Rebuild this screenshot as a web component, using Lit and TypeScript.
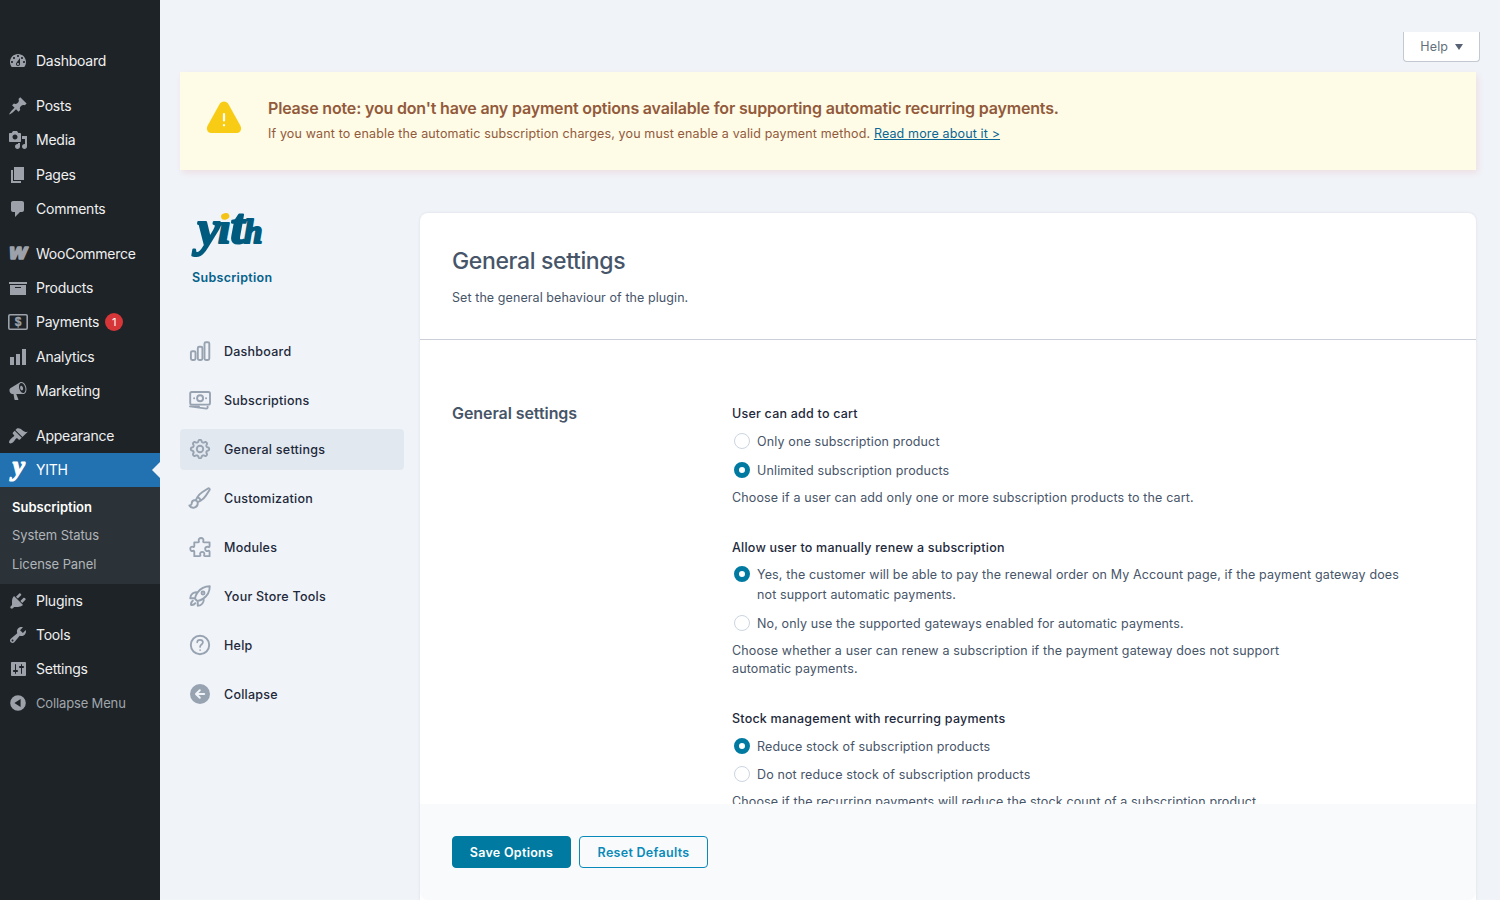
import { LitElement, html, svg, css } from "lit";
import { customElement, property } from "lit/decorators.js";
import { classMap } from "lit/directives/class-map.js";

const solid = (d: string) => svg`<path fill="currentColor" fill-rule="evenodd" d=${d}></path>`;

const menuIcons: Record<string, unknown> = {
  dashboard: solid("M3.76 16h12.48c1.1-1.37 1.76-3.11 1.76-5 0-4.42-3.58-8-8-8s-8 3.58-8 8c0 1.89.66 3.63 1.76 5zM10 4c.55 0 1 .45 1 1s-.45 1-1 1-1-.45-1-1 .45-1 1-1zM6 6c.55 0 1 .45 1 1s-.45 1-1 1-1-.45-1-1 .45-1 1-1zm8 0c.55 0 1 .45 1 1s-.45 1-1 1-1-.45-1-1 .45-1 1-1zm-5.37 5.55L12 7v6c0 1.1-.9 2-2 2s-2-.9-2-2c0-.57.24-1.08.63-1.45zM4 10c.55 0 1 .45 1 1s-.45 1-1 1-1-.45-1-1 .45-1 1-1zm12 0c.55 0 1 .45 1 1s-.45 1-1 1-1-.45-1-1 .45-1 1-1zm-5 3c0-.55-.45-1-1-1s-1 .45-1 1 .45 1 1 1 1-.45 1-1z"),
  post: solid("M10.44 3.02l1.82-1.82 6.36 6.35-1.83 1.82c-1.05-.68-2.48-.57-3.41.36l-.75.75c-.92.93-1.04 2.35-.35 3.41l-1.83 1.82-2.41-2.41-2.8 2.79c-.42.42-3.38 2.71-3.8 2.29s1.86-3.39 2.28-3.81l2.79-2.79L4.1 9.36l1.83-1.82c1.05.69 2.48.57 3.4-.36l.75-.75c.93-.92 1.05-2.35.36-3.41z"),
  media: solid("M13 11V4c0-.55-.45-1-1-1h-1.67L9 1H5L3.67 3H2c-.55 0-1 .45-1 1v7c0 .55.45 1 1 1h10c.55 0 1-.45 1-1zM7 4.5c1.38 0 2.5 1.12 2.5 2.5S8.38 9.5 7 9.5 4.5 8.38 4.5 7 5.62 4.5 7 4.5zM14 6h5v10.5c0 1.38-1.12 2.5-2.5 2.5S14 17.88 14 16.5s1.12-2.5 2.5-2.5c.17 0 .34.02.5.05V9h-3V6zm-4 8.05V13h2v3.5c0 1.38-1.12 2.5-2.5 2.5S7 17.88 7 16.5 8.12 14 9.5 14c.17 0 .34.02.5.05z"),
  page: solid("M6 15V2h10v13H6zm-1 1h8v2H3V5h2v11z"),
  comment: solid("M5 2h9c1.1 0 2 .9 2 2v7c0 1.1-.9 2-2 2h-2l-5 5v-5H5c-1.1 0-2-.9-2-2V4c0-1.1.9-2 2-2z"),
  woo: svg`<text class="woo" x="10" y="15.4" text-anchor="middle" textLength="18.5" lengthAdjust="spacingAndGlyphs">W</text>`,
  archive: solid("M19 4v2H1V4h18zM2 7h16v10H2V7zm11 3V9H7v1h6z"),
  money: svg`<rect x=".8" y="2.8" width="18.4" height="14.4" rx="1.2" fill="none" stroke="currentColor" stroke-width="1.6"></rect><text class="dollar" x="10" y="14.3" text-anchor="middle">$</text>`,
  chart: solid("M18 18V2h-4v16h4zm-6 0V7H8v11h4zm-6 0v-8H2v8h4z"),
  megaphone: solid("M18.15 5.94c.46 1.62.38 3.22-.02 4.48-.42 1.28-1.26 2.18-2.3 2.48-.16.06-.26.06-.4.06-.06.02-.12.02-.18.02-.06.02-.14.02-.22.02h-6.8l2.22 5.5c.02.14-.06.26-.14.34-.08.1-.24.16-.34.16H6.95c-.1 0-.26-.06-.34-.16-.08-.08-.16-.2-.14-.34l-1-5.5H4.25l-.02-.02c-.5.06-1.08-.18-1.54-.62s-.88-1.08-1.06-1.88c-.24-.8-.2-1.56-.02-2.2.18-.62.58-1.08 1.06-1.3l.02-.02 9-5.4c.1-.06.18-.1.24-.16.06-.04.14-.08.24-.12.16-.08.28-.12.5-.18 1.04-.3 2.24.1 3.22.98s1.84 2.24 2.26 3.86zm-2.58 5.98h-.02c.4-.1.74-.34 1.04-.7.58-.7.86-1.76.86-3.04 0-.64-.1-1.3-.28-1.98-.34-1.36-1.02-2.5-1.78-3.24s-1.68-1.1-2.46-.88c-.82.22-1.4.96-1.7 2-.32 1.04-.28 2.36.06 3.72.38 1.36 1 2.5 1.8 3.24.78.74 1.62 1.1 2.48.88zm-2.54-7.08c.22-.04.42-.02.62.04.38.16.76.48 1.02 1s.42 1.2.42 1.78c0 .3-.04.56-.12.8-.18.48-.44.84-.86.94-.34.1-.8-.06-1.14-.4s-.64-.86-.78-1.5c-.18-.62-.12-1.24.02-1.72s.48-.84.82-.94z"),
  brush: solid("M14.48 11.06L7.41 3.99l1.5-1.5c.5-.56 2.3-.47 3.51.32 1.21.8 1.43 1.28 2.91 2.1 1.18.64 2.45 1.26 4.45.85zm-.71.71L6.7 4.7 4.93 6.47c-.39.39-.39 1.02 0 1.41l1.06 1.06c.39.39.39 1.03 0 1.42-.6.6-1.43 1.11-2.21 1.69-.35.26-.7.53-1.01.84C1.43 14.23.4 16.08 1.4 17.07c.99 1 2.84-.03 4.18-1.36.31-.31.58-.66.85-1.02.57-.78 1.08-1.61 1.69-2.21.39-.39 1.02-.39 1.41 0l1.06 1.06c.39.39 1.02.39 1.41 0z"),
  yith: svg`<text class="script" x="10.5" y="15" text-anchor="middle">y</text>`,
  plugin: solid("M13.11 4.36L9.87 7.6 8 5.73l3.24-3.24c.35-.34 1.05-.2 1.56.32.52.51.66 1.21.31 1.55zm-8 1.77l.91-1.12 9.01 9.01-1.19.84c-.71.71-2.63 1.16-3.82 1.16H6.14L4.9 17.26c-.59.59-1.54.59-2.12 0-.59-.58-.59-1.53 0-2.12l1.24-1.24v-3.88c0-1.13.4-3.19 1.09-3.89zm7.26 3.97l3.24-3.24c.34-.35 1.04-.21 1.55.31.52.51.66 1.21.31 1.55l-3.24 3.25z"),
  tools: solid("M16.68 9.77c-1.34 1.34-3.3 1.67-4.95.99l-5.41 6.52c-.99.99-2.59.99-3.58 0s-.99-2.59 0-3.57l6.52-5.42c-.68-1.65-.35-3.61.99-4.95 1.28-1.28 3.12-1.62 4.72-1.06l-2.89 2.89 2.82 2.82 2.86-2.87c.53 1.58.18 3.39-1.08 4.65zM3.81 16.21c.4.39 1.04.39 1.43 0 .4-.4.4-1.04 0-1.43-.39-.4-1.03-.4-1.43 0-.39.39-.39 1.03 0 1.43z"),
  settings: solid("M18 16V4c0-.55-.45-1-1-1H4c-.55 0-1 .45-1 1v12c0 .55.45 1 1 1h13c.55 0 1-.45 1-1zM8 11h1c.55 0 1 .45 1 1s-.45 1-1 1H8v1.5c0 .28-.22.5-.5.5s-.5-.22-.5-.5V13H6c-.55 0-1-.45-1-1s.45-1 1-1h1V5.5c0-.28.22-.5.5-.5s.5.22.5.5V11zm5-2h-1c-.55 0-1-.45-1-1s.45-1 1-1h1V5.5c0-.28.22-.5.5-.5s.5.22.5.5V7h1c.55 0 1 .45 1 1s-.45 1-1 1h-1v5.5c0 .28-.22.5-.5.5s-.5-.22-.5-.5V9z"),
  collapse: solid("M10 2.2a7.8 7.8 0 1 0 0 15.6 7.8 7.8 0 0 0 0-15.6zM12.6 6v8L6.4 10z"),
};

/* Eight-lobed gear outline sampled around a circle. */
const gearPath = (() => {
  const pts: string[] = [];
  for (let i = 0; i < 192; i++) {
    const a = (i / 192) * Math.PI * 2;
    const r = 8.1 + 1.15 * Math.tanh(1.6 * Math.cos(8 * a));
    pts.push(`${(12 + r * Math.cos(a)).toFixed(2)} ${(12 + r * Math.sin(a)).toFixed(2)}`);
  }
  return `M${pts.join("L")}z`;
})();

const navIcons: Record<string, unknown> = {
  bars: svg`<rect x="2.9" y="12.2" width="4.6" height="8.8" rx="1.4"></rect><rect x="9.8" y="7.8" width="4.6" height="13.2" rx="1.4"></rect><rect x="16.5" y="3.2" width="4.8" height="17.8" rx="1.4"></rect>`,
  notes: svg`<rect x="2.2" y="4" width="19.8" height="12.6" rx="1.6"></rect><circle cx="12.1" cy="10.3" r="3"></circle><path d="M6.1 10.3h.1M18 10.3h.1M2 18.4l16.4 2.2c.7.1 1.2-.4 1.2-1v-1M2 18.4h9"></path>`,
  cog: svg`<path d=${gearPath}></path><circle cx="12" cy="12" r="3.2"></circle>`,
  paint: svg`<path d="M9.53 16.122a3 3 0 00-5.78 1.128 2.25 2.25 0 01-2.4 2.245 4.5 4.5 0 008.4-2.245c0-.399-.078-.78-.22-1.128zm0 0a15.998 15.998 0 003.388-1.62m-5.043-.025a15.994 15.994 0 011.622-3.395m3.42 3.42a15.995 15.995 0 004.764-4.648l3.876-5.814a1.151 1.151 0 00-1.597-1.597L14.146 6.32a15.996 15.996 0 00-4.649 4.763m3.42 3.42a6.776 6.776 0 00-3.42-3.42"></path>`,
  puzzle: svg`<path transform="translate(.9 .3) scale(.98)" d="M5.5 7.2h3.6c1.3 0 1.3-.9 1-1.500-.6-1.700.6-3 2.300-3s2.900 1.300 2.300 3c-.3.600-.3 1.500 1 1.500h5.400v3.800c0 1.200-.8 1.200-1.500.9-1.500-.6-3 .4-3 2s1.500 2.700 3 2c.7-.3 1.500-.2 1.500.9v4.500h-4.600c-1.100 0-1.200-.8-.9-1.500.6-1.500-.4-2.900-2-2.900s-2.600 1.400-2 2.900c.3.700.2 1.500-.9 1.500H5.500v-4.600c0-1.100-.7-1.200-1.300-.9-1.500.7-2.800-.4-2.800-2s1.300-2.600 2.800-2c.6.300 1.300.2 1.300-.9z"></path>`,
  rocket: svg`<path d="M15.59 14.37a6 6 0 01-5.84 7.38v-4.8m5.84-2.58a14.98 14.98 0 006.16-12.12A14.98 14.98 0 009.631 8.41m5.96 5.96a14.926 14.926 0 01-5.841 2.58m-.119-8.54a6 6 0 00-7.381 5.84h4.8m2.581-5.84a14.927 14.927 0 00-2.58 5.84m2.699 2.7c-.103.021-.207.041-.311.06a15.09 15.09 0 01-2.448-2.448 14.9 14.9 0 01.06-.312m-2.24 2.39a4.493 4.493 0 00-1.757 4.306 4.493 4.493 0 004.306-1.758M16.5 9a1.5 1.5 0 11-3 0 1.5 1.5 0 013 0z"></path>`,
  help: svg`<circle cx="12" cy="12" r="9.2"></circle><path stroke-width="1.7" d="M9.2 9.3c0-1.600 1.300-2.500 2.800-2.500s2.900 1 2.900 2.500c0 2.200-2.800 2.200-2.800 4.400v.2M12.100 17v.1"></path>`,
  back: svg`<circle cx="12" cy="12" r="10" fill="currentColor" stroke="none"></circle><path class="knock" d="M16.2 12H8.6M11.8 8.2L8 12l3.8 3.8"></path>`,
};

interface MenuEntry { icon: string; label: string; badge?: string; active?: boolean; gap?: boolean; sub?: string[]; muted?: boolean }

const MENU: MenuEntry[] = [
  { icon: "dashboard", label: "Dashboard" },
  { icon: "post", label: "Posts", gap: true },
  { icon: "media", label: "Media" },
  { icon: "page", label: "Pages" },
  { icon: "comment", label: "Comments" },
  { icon: "woo", label: "WooCommerce", gap: true },
  { icon: "archive", label: "Products" },
  { icon: "money", label: "Payments", badge: "1" },
  { icon: "chart", label: "Analytics" },
  { icon: "megaphone", label: "Marketing" },
  { icon: "brush", label: "Appearance", gap: true },
  { icon: "yith", label: "YITH", active: true, sub: ["Subscription", "System Status", "License Panel"] },
  { icon: "plugin", label: "Plugins" },
  { icon: "tools", label: "Tools" },
  { icon: "settings", label: "Settings" },
  { icon: "collapse", label: "Collapse Menu", muted: true },
];

@customElement("admin-menu")
class AdminMenu extends LitElement {
  static styles = css`
    :host { display: block; width: 160px; box-sizing: border-box; padding-top: 44px; background: #1d2327; font: 14px/18px Inter, sans-serif; color: #f0f0f1; }
    .item { display: flex; align-items: center; height: 34.3px; padding-left: 8px; position: relative; letter-spacing: -0.24px; }
    .gap { margin-top: 10.6px; }
    .icon { width: 20px; height: 20px; flex: none; margin-right: 8px; color: #9ca1aa; overflow: visible; }
    .active { background: #2271b1; color: #fff; }
    .active .icon { color: #fff; }
    .active::after { content: ""; position: absolute; right: 0; top: 9px; border: 8px solid transparent; border-right-color: #f0f3f8; border-left: 0; }
    .muted { color: #a0a6ac; font-size: 13px; letter-spacing: -0.15px; height: 32.6px; }
    .badge { margin-left: 6px; width: 18px; height: 18px; border-radius: 9px; background: #d63638; color: #fff; font-size: 11px; line-height: 18px; text-align: center; }
    .sub { background: #2c3338; padding: 5.7px 0 5.3px 12px; font-size: 13px; letter-spacing: -0.08px; color: #b0b5ba; }
    .subitem { height: 28.4px; line-height: 28.4px; }
    .current { color: #fff; font-weight: 600; letter-spacing: 0; }
    .woo { font: italic 900 15px "DejaVu Sans", sans-serif; fill: currentColor; stroke: currentColor; stroke-width: 1.6; stroke-linejoin: round; }
    .dollar { font: 700 12px "Liberation Sans", sans-serif; fill: currentColor; stroke: currentColor; stroke-width: .3; }
    .script { font: italic 700 28px "Liberation Serif", serif; fill: currentColor; stroke: currentColor; stroke-width: 1.2; stroke-linejoin: round; }
  `;
  render() {
    return html`${MENU.map((m) => html`
      <div class=${classMap({ item: true, gap: !!m.gap, active: !!m.active, muted: !!m.muted })}>
        <svg class="icon" viewBox="0 0 20 20">${menuIcons[m.icon]}</svg>
        <span>${m.label}</span>${m.badge ? html`<span class="badge">${m.badge}</span>` : ""}
      </div>
      ${m.sub ? html`<div class="sub">${m.sub.map((s, i) => html`<div class=${classMap({ subitem: true, current: i === 0 })}>${s}</div>`)}</div>` : ""}`)}`;
  }
}

const NAV: [string, string][] = [
  ["bars", "Dashboard"], ["notes", "Subscriptions"], ["cog", "General settings"], ["paint", "Customization"],
  ["puzzle", "Modules"], ["rocket", "Your Store Tools"], ["help", "Help"], ["back", "Collapse"],
];

@customElement("plugin-nav")
class PluginNav extends LitElement {
  static styles = css`
    :host { display: block; width: 224px; font: 500 12.5px/20px Inter, sans-serif; color: #1e293b; letter-spacing: 0.24px; }
    .brand { height: 118px; padding-left: 12px; box-sizing: border-box; }
    .logo { display: block; width: 72px; height: 46px; overflow: visible; }
    .word { font: italic 700 45px "Liberation Serif", serif; fill: #005b7f; stroke: #005b7f; stroke-width: 2.2; stroke-linejoin: round; }
    .big { font-size: 51px; }
    .tall { font-size: 51px; }
    .low { font-size: 33px; }
    .name { margin-top: 9px; color: #04628a; font-weight: 600; letter-spacing: 0.3px; }
    .entry { display: flex; align-items: center; height: 41px; box-sizing: border-box; padding-bottom: 2px; margin-bottom: 8px; padding-left: 8px; border-radius: 4px; }
    .text { margin-top: 2px; }
    .selected { background: #e2e8f0; }
    .icon { width: 24px; height: 24px; margin-right: 12px; fill: none; stroke: currentColor; color: #98a3b1; stroke-width: 1.9; stroke-linecap: round; stroke-linejoin: round; }
    .knock { stroke: #f0f3f8; stroke-width: 2; }
  `;
  render() {
    return html`
      <div class="brand">
        <svg class="logo" viewBox="0 0 72 46">
          <text class="word" y="30"><tspan class="big" x="5.5" y="31.5">y</tspan><tspan x="26" y="30">i</tspan><tspan class="tall" x="38.5">t</tspan><tspan class="low" x="52">h</tspan></text>
          <ellipse cx="35" cy="1.2" rx="6.2" ry="6.4" fill="#f0f3f8"></ellipse>
          <ellipse cx="33.2" cy="3.3" rx="4.2" ry="3.2" fill="#f3c316" transform="rotate(-15 33.2 3.3)"></ellipse>
        </svg>
        <div class="name">Subscription</div>
      </div>
      ${NAV.map(([icon, label]) => html`
        <div class=${classMap({ entry: true, selected: icon === "cog" })}>
          <svg class="icon" viewBox="0 0 24 24">${navIcons[icon]}</svg><span class="text">${label}</span>
        </div>`)}`;
  }
}

@customElement("option-field")
class OptionField extends LitElement {
  @property() label = "";
  @property() note = "";
  @property({ type: Array }) options: string[] = [];
  @property({ type: Number }) selected = 0;
  static styles = css`
    :host { display: block; font: 12.5px/20px Inter, sans-serif; color: #475569; letter-spacing: 0.137px; }
    .label { color: #1e293b; font-weight: 500; line-height: 18px; letter-spacing: 0.22px; }
    .row { display: flex; gap: 7px; margin-top: 8.6px; padding-left: 2px; width: 680px; box-sizing: border-box; }
    .radio { flex: none; box-sizing: border-box; width: 16px; height: 16px; margin-top: 1px; border: 1px solid #cbd5e1; border-radius: 50%; background: #fff; }
    .on { border: 5px solid #007aa0; }
    .note { margin-top: 8px; line-height: 18px; max-width: 580px; }
  `;
  render() {
    return html`
      <div class="label">${this.label}</div>
      ${this.options.map((o, i) => html`<div class="row"><span class=${classMap({ radio: true, on: i === this.selected })}></span><span>${o}</span></div>`)}
      <div class="note">${this.note}</div>`;
  }
}

@customElement("app-root")
class AppRoot extends LitElement {
  static styles = css`
    :host { display: flex; height: 900px; overflow: hidden; background: #f0f3f8; font: 12.5px/20px Inter, sans-serif; color: #475569; letter-spacing: 0.137px; }
    .main { flex: 1; padding: 32px 20px 0; display: flex; flex-direction: column; }
    .help { align-self: flex-end; box-sizing: border-box; width: 77px; height: 30px; border: 1px solid #c3c9d1; border-top: 0; border-radius: 0 0 4px 4px; background: #fff; display: flex; align-items: center; justify-content: center; gap: 6.5px; color: #646f7d; }
    .help-text { margin-top: 1px; }
    .caret { border: 4.5px solid transparent; border-top: 6.5px solid #566273; border-bottom: 0; }
    .notice { flex: none; box-sizing: border-box; height: 98px; margin: 10px 4px 0 0; padding: 25px 26px; background: #fefbe6; box-shadow: 2px 3px 6px rgba(213, 90, 90, .12); display: flex; gap: 26px; color: #925a3b; }
    .warn { width: 36px; height: 36px; flex: none; margin-top: 3px; }
    .notice-title { font-weight: 600; font-size: 16px; line-height: 22px; letter-spacing: -0.175px; }
    .notice-text { margin-top: 5px; line-height: 20px; letter-spacing: 0.145px; }
    .link { color: #0b6695; text-decoration: underline; }
    .body { flex: 1; min-height: 0; display: flex; gap: 16px; margin: 43px 4px 0 0; }
    .panel { flex: 1; display: flex; flex-direction: column; background: #fff; border-radius: 8px 8px 0 0; box-shadow: 0 0 3px rgba(30, 41, 59, .1); overflow: hidden; }
    .head { flex: none; box-sizing: border-box; height: 127px; padding: 32px 32px 0; border-bottom: 1px solid #cbd0d8; }
    .title { font-size: 23px; line-height: 32px; font-weight: 500; letter-spacing: -0.36px; color: #475569; }
    .lead { margin-top: 11px; letter-spacing: 0.08px; }
    .fields { flex: 1; min-height: 0; overflow: hidden; padding: 64.4px 32px 0; display: grid; grid-template-columns: 280px 1fr; }
    .section { font-size: 16px; line-height: 18px; font-weight: 600; letter-spacing: -0.07px; color: #475569; }
    .stack { display: flex; flex-direction: column; gap: 32.2px; padding-top: 1px; }
    .foot { flex: none; box-sizing: border-box; height: 96px; padding: 32px; background: #f8fafc; border-radius: 0 0 8px 8px; display: flex; gap: 8px; }
    .btn { box-sizing: border-box; height: 32px; border-radius: 4px; border: 1px solid #007aa0; text-align: center; line-height: 31px; font-weight: 600; letter-spacing: 0.29px; }
    .save { width: 119px; background: #007aa0; color: #fff; }
    .reset { width: 129px; border-color: #0a8ab8; color: #0a8ab8; }
  `;
  render() {
    return html`
      <admin-menu></admin-menu>
      <div class="main">
        <div class="help"><span class="help-text">Help</span><span class="caret"></span></div>
        <div class="notice">
          <svg class="warn" viewBox="0 0 36 36"><path d="M13.5 4.2c2-3.5 7-3.5 9 0L34.3 25.5c2 3.6.2 7.5-3.8 7.5H5.5c-4 0-5.8-3.9-3.8-7.5z" fill="#f8cc15"></path><path d="M18 14.2v6.2M18 25v.3" stroke="#fff" stroke-width="2.2" stroke-linecap="round"></path></svg>
          <div>
            <div class="notice-title">Please note: you don't have any payment options available for supporting automatic recurring payments.</div>
            <div class="notice-text">If you want to enable the automatic subscription charges, you must enable a valid payment method. <span class="link">Read more about it &gt;</span></div>
          </div>
        </div>
        <div class="body">
          <plugin-nav></plugin-nav>
          <div class="panel">
            <div class="head"><div class="title">General settings</div><div class="lead">Set the general behaviour of the plugin.</div></div>
            <div class="fields">
              <div class="section">General settings</div>
              <div class="stack">
                <option-field label="User can add to cart" .options=${["Only one subscription product", "Unlimited subscription products"]} .selected=${1} note="Choose if a user can add only one or more subscription products to the cart."></option-field>
                <option-field label="Allow user to manually renew a subscription" .options=${["Yes, the customer will be able to pay the renewal order on My Account page, if the payment gateway does not support automatic payments.", "No, only use the supported gateways enabled for automatic payments."]} note="Choose whether a user can renew a subscription if the payment gateway does not support automatic payments."></option-field>
                <option-field label="Stock management with recurring payments" .options=${["Reduce stock of subscription products", "Do not reduce stock of subscription products"]} note="Choose if the recurring payments will reduce the stock count of a subscription product."></option-field>
              </div>
            </div>
            <div class="foot"><div class="btn save">Save Options</div><div class="btn reset">Reset Defaults</div></div>
          </div>
        </div>
      </div>`;
  }
}
